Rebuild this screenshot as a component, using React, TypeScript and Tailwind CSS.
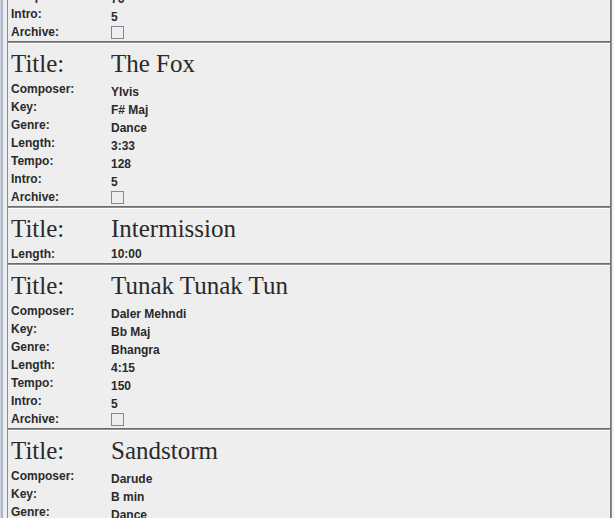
import React from "react";

type Song = {
  title: string;
  fields: [string, string][];
  archive: boolean;
  flat?: boolean;
};

const songs: Song[] = [
  {
    title: "The Fox",
    fields: [
      ["Composer:", "Ylvis"],
      ["Key:", "F# Maj"],
      ["Genre:", "Dance"],
      ["Length:", "3:33"],
      ["Tempo:", "128"],
      ["Intro:", "5"],
    ],
    archive: true,
  },
  {
    title: "Intermission",
    fields: [["Length:", "10:00"]],
    archive: false,
    flat: true,
  },
  {
    title: "Tunak Tunak Tun",
    fields: [
      ["Composer:", "Daler Mehndi"],
      ["Key:", "Bb Maj"],
      ["Genre:", "Bhangra"],
      ["Length:", "4:15"],
      ["Tempo:", "150"],
      ["Intro:", "5"],
    ],
    archive: true,
  },
  {
    title: "Sandstorm",
    fields: [
      ["Composer:", "Darude"],
      ["Key:", "B min"],
      ["Genre:", "Dance"],
      ["Length:", "4:03"],
      ["Tempo:", "136"],
      ["Intro:", "5"],
    ],
    archive: true,
  },
];

const sans = { fontFamily: '"Liberation Sans", Arial, sans-serif' };
const serif = { fontFamily: '"Liberation Serif", "Times New Roman", serif' };

function Row({ label, value, flat }: { label: string; value: string; flat?: boolean }) {
  return (
    <div className="flex h-[18px] text-[12px] font-bold text-[#2a2a2a]" style={sans}>
      <div className="w-[100px] leading-[18px]">{label}</div>
      <div className={flat ? "leading-[18px]" : "leading-[18px] mt-[3px]"}>{value}</div>
    </div>
  );
}

function ArchiveRow() {
  return (
    <div className="flex h-[18px] text-[12px] font-bold text-[#2a2a2a]" style={sans}>
      <div className="w-[100px] leading-[18px]">Archive:</div>
      <div className="mt-[3px] w-[13px] h-[13px] border border-[#7a8a99] bg-[#eeeeee]" />
    </div>
  );
}

function Separator() {
  return (
    <div className="flex flex-col shrink-0">
      <div className="h-px bg-[#6e6e6e]" />
      <div className="h-px bg-[#8e8e8e]" />
      <div className="h-px bg-white" />
    </div>
  );
}

function SongPanel({ song }: { song: Song }) {
  return (
    <div className="pl-[3px] shrink-0">
      <div className="flex pt-[6px] pb-[2px] text-[25px] leading-[28px] text-[#2a2a2a]" style={serif}>
        <div className="w-[100px]">Title:</div>
        <div>{song.title}</div>
      </div>
      {song.fields.map(([l, v]) => (
        <Row key={l} label={l} value={v} flat={song.flat} />
      ))}
      {song.archive && <ArchiveRow />}
    </div>
  );
}

export default function App() {
  return (
    <div className="w-[614px] h-[518px] overflow-hidden flex bg-[#eeeeee]">
      <div className="flex shrink-0 w-[8px]">
        <div className="w-px bg-[#d4d4d4]" />
        <div className="w-[2px] bg-[#a3b8d9]" />
        <div className="w-[4px] bg-[#eeeeee]" />
        <div className="w-px bg-[#8a8a8a]" />
      </div>
      <div className="flex-1 flex flex-col overflow-hidden">
        <div className="pl-[3px] shrink-0 -mt-[13px]">
          <Row label="Tempo:" value="76" />
          <Row label="Intro:" value="5" />
          <ArchiveRow />
        </div>
        {songs.map((s) => (
          <React.Fragment key={s.title}>
            <Separator />
            <SongPanel song={s} />
          </React.Fragment>
        ))}
      </div>
      <div className="flex shrink-0">
        <div className="w-px bg-[#7a7a7a]" />
        <div className="w-px bg-[#8e8e8e]" />
        <div className="w-[2px] bg-[#f4f4f4]" />
      </div>
    </div>
  );
}
